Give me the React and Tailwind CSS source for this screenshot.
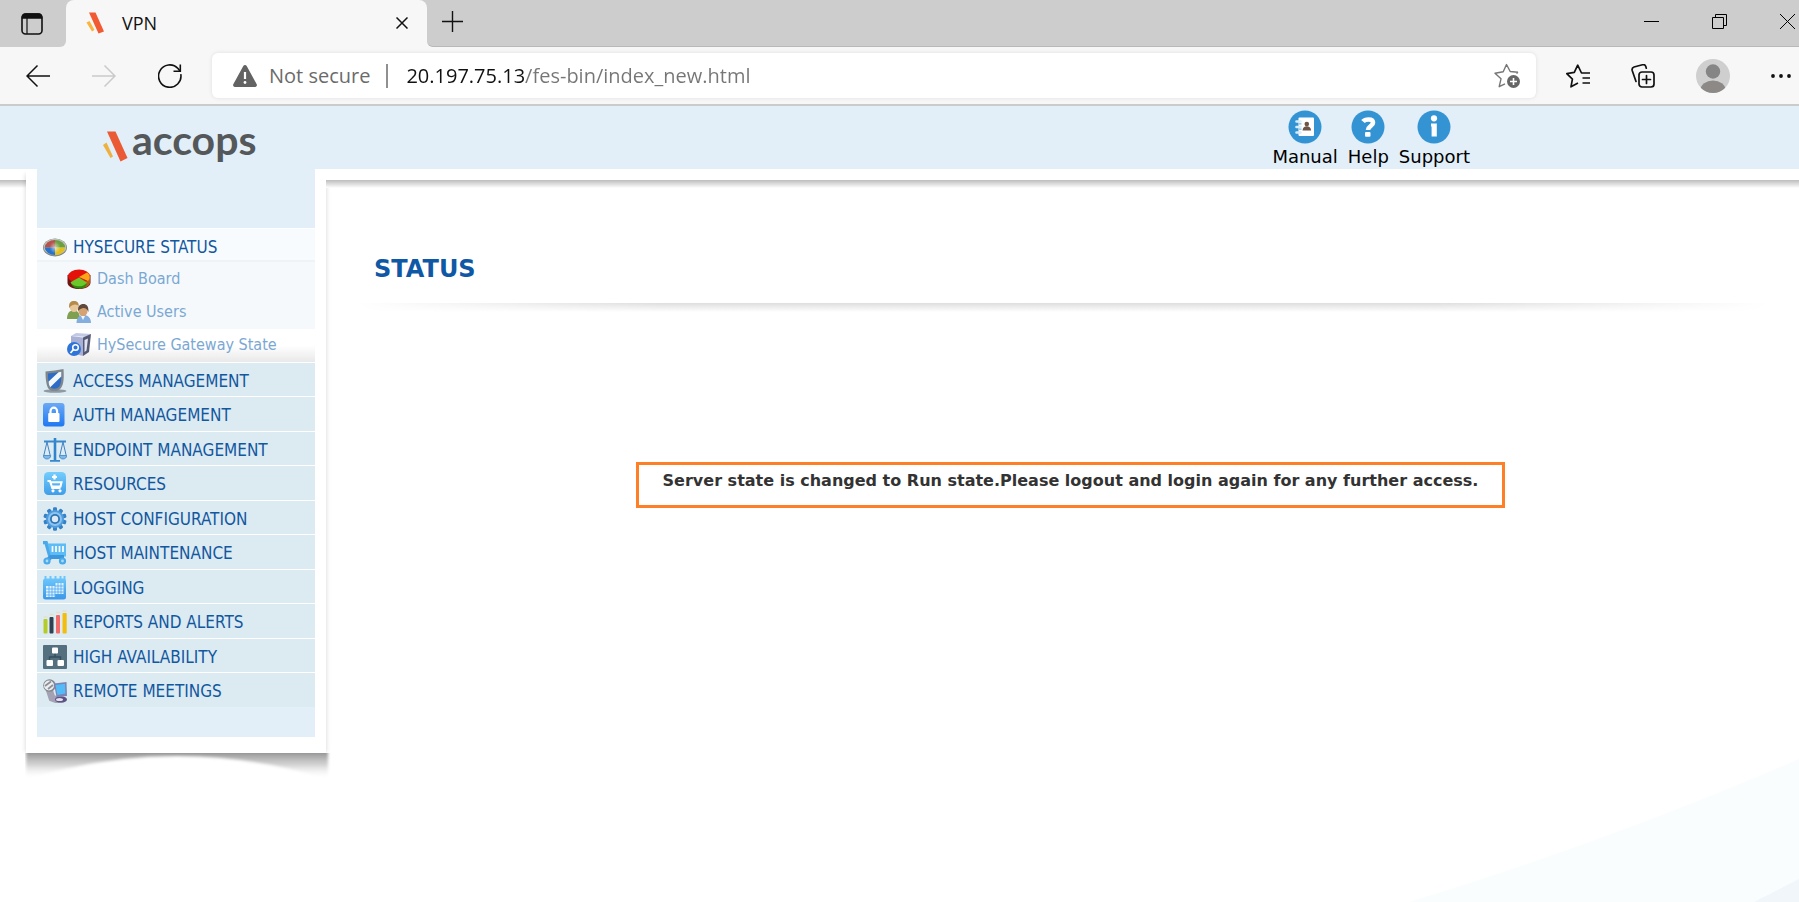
import React from 'react';

// --- BROWSER ICONS ---
const TabActionsIcon = () => (
  <svg viewBox="0 0 22 22" className="size-[22px]" fill="none" stroke="#111" strokeWidth="1.6">
    <rect x="1" y="1" width="20" height="20" rx="3.5" />
    <path d="M1.5 5V4a3 3 0 0 1 3-3h13a3 3 0 0 1 3 3v1z" fill="#111" />
    <path d="M6 5v16" strokeWidth="1.2" />
  </svg>
);

const Favicon = () => (
  <svg viewBox="0 0 18 22" className="h-[22px] w-[18px]">
    <path d="M3 .5h6.500l8.500 19-5.500 2z" fill="#f15a33" />
    <path d="M.5 10.500l3-1.500 5 9-2.500 1.500z" fill="#f9b53c" />
  </svg>
);

const CloseIcon = () => (
  <svg viewBox="0 0 12 12" className="size-3" fill="none" stroke="#111" strokeWidth="1.5">
    <path d="M.5.5l11 11M11.500.5l-11 11" />
  </svg>
);

const PlusIcon = () => (
  <svg viewBox="0 0 21 21" className="size-[21px]" fill="none" stroke="#111" strokeWidth="1.4">
    <path d="M10.500 0v21M0 10.500h21" />
  </svg>
);

const BackIcon = () => (
  <svg viewBox="0 0 24 24" className="size-6" fill="none" stroke="currentColor" strokeWidth="1.5">
    <path d="M24 12H1M11.500 1.500L1 12l10.500 10.500" />
  </svg>
);

const ReloadIcon = () => (
  <svg viewBox="0 0 24 24" className="size-6" fill="none" stroke="#111" strokeWidth="1.6">
    <path d="M22.800 10.200A11.200 11.200 0 1 1 20 4.500l2 2.500" />
    <path d="M22.300.5V7.200h-6.800" />
  </svg>
);

const WarningIcon = () => (
  <svg viewBox="0 0 24 22" className="h-[22px] w-6">
    <path d="M10.300 1a2 2 0 0 1 3.400 0l10 18.200A1.900 1.900 0 0 1 22 22H2a1.900 1.900 0 0 1-1.700-2.800z" fill="#636363" />
    <path d="M12 7v7" stroke="#fff" strokeWidth="2.200" />
    <circle cx="12" cy="17.500" r="1.400" fill="#fff" />
  </svg>
);

const AddFavoriteIcon = () => (
  <svg viewBox="0 0 26 26" className="size-[26px]" fill="none" stroke="#767676" strokeWidth="1.4" strokeLinejoin="round">
    <path d="M24 9.200l-7.800-.7L12.500 1.500 9.200 8.700 1 10.300l6 5.500L5.200 23.700l5.800-2.800M24 9.200l-1.500 1.300" />
    <circle cx="19.500" cy="18.500" r="6.500" fill="#666" stroke="none" />
    <path d="M19.500 15v7M16 18.500h7" stroke="#fff" strokeWidth="1.600" />
  </svg>
);

const FavoritesIcon = () => (
  <svg viewBox="0 0 24 24" className="size-6" fill="none" stroke="#111" strokeWidth="1.7" strokeLinejoin="round">
    <path d="M24 9h-8.500L11.700 1.200 8.300 8.300.8 9.600l5.600 5.500L5 22.800l7-3.800M16.500 14H24M16.500 19H24" />
  </svg>
);

const CollectionsIcon = () => (
  <svg viewBox="0 0 24 24" className="size-6" fill="none" stroke="#111" strokeWidth="1.7" strokeLinecap="round">
    <rect x="8" y="8" width="15" height="15" rx="3" />
    <path d="M15.500 11.500v8M11.500 15.500h8" />
    <path d="M5 17.500L1.200 6.500C.8 4.800 1.400 3.500 3 3l8.500-2.200c1.600-.4 2.800.3 3.300 1.800l.5 1.600" />
  </svg>
);

const AvatarIcon = () => (
  <svg viewBox="0 0 34 34" className="size-[34px]">
    <defs>
      <clipPath id="avatarClip"><circle cx="17" cy="17" r="17" /></clipPath>
    </defs>
    <g clipPath="url(#avatarClip)">
      <rect width="34" height="34" fill="#cfcfcf" />
      <circle cx="17" cy="12.500" r="7.200" fill="#858585" />
      <ellipse cx="17" cy="31" rx="12.500" ry="9.500" fill="#8d8987" />
    </g>
  </svg>
);

const DotsIcon = () => (
  <svg viewBox="0 0 20 4" className="h-1 w-5" fill="#111">
    <circle cx="2" cy="2" r="1.900" />
    <circle cx="10" cy="2" r="1.900" />
    <circle cx="18" cy="2" r="1.900" />
  </svg>
);

// --- PAGE HEADER ICONS ---
const ManualIcon = () => (
  <svg viewBox="0 0 34 34" className="size-[34px]">
    <circle cx="17" cy="17" r="16.500" fill="#3494d3" />
    <rect x="10.500" y="7.500" width="15.500" height="18.500" rx="1" fill="#fff" />
    <path d="M8.500 11.500h4M8.500 17h4M8.500 22.500h4" stroke="#dcecf7" strokeWidth="2.600" strokeLinecap="round" />
    <path d="M11 13.800h2.500M11 19.200h2.500" stroke="#7db9e2" strokeWidth="1.200" />
    <circle cx="18.800" cy="14" r="2.300" fill="#6d5445" />
    <path d="M14.500 20.500c.3-3 2-4.300 4.300-4.300s4 1.300 4.300 4.300z" fill="#6d5445" />
  </svg>
);

const HelpIcon = () => (
  <svg viewBox="0 0 34 34" className="size-[34px]">
    <circle cx="17" cy="17" r="16.500" fill="#3494d3" />
    <path d="M12 11.500c2-2.500 9.800-3.300 10 1 .2 3.500-4.800 3.500-5 7.500" fill="none" stroke="#fff" strokeWidth="4.600" />
    <rect x="14" y="22" width="5.500" height="4.800" rx="1" fill="#fff" />
  </svg>
);

const SupportIcon = () => (
  <svg viewBox="0 0 34 34" className="size-[34px]">
    <circle cx="17" cy="17" r="16.500" fill="#3494d3" />
    <circle cx="17" cy="8.300" r="3.100" fill="#fff" />
    <path d="M14 13.500h5.800v13h-5.200v-10H14z" fill="#fff" />
  </svg>
);

// --- MENU ICONS ---
const GlobeIcon = () => (
  <svg viewBox="0 0 24 24" className="size-6">
    <defs>
      <clipPath id="globeClip"><ellipse cx="12" cy="12.500" rx="10.200" ry="7.500" /></clipPath>
      <radialGradient id="globeGlow" cx=".5" cy=".5" r=".5">
        <stop offset="0" stopColor="#fff" stopOpacity=".6" />
        <stop offset="1" stopColor="#fff" stopOpacity="0" />
      </radialGradient>
    </defs>
    <ellipse cx="12" cy="12.500" rx="12" ry="9" fill="#80877f" />
    <ellipse cx="12" cy="12" rx="11.300" ry="8.200" fill="#bcc3bb" />
    <g clipPath="url(#globeClip)">
      <rect width="12" height="12.500" fill="#b5524b" />
      <rect x="12" width="12" height="12.500" fill="#6ba042" />
      <rect y="12.500" width="12" height="12" fill="#2672cc" />
      <rect x="12" y="12.500" width="12" height="12" fill="#e2c01e" />
      <ellipse cx="12" cy="12.500" rx="5.500" ry="6" fill="url(#globeGlow)" />
    </g>
  </svg>
);

const PieIcon = () => (
  <svg viewBox="0 0 24 24" className="size-6">
    <path d="M.5 8v7.500c0 4 5 6.500 11.500 6.500s11.500-2.500 11.500-6.500V8z" fill="#6e1512" />
    <path d="M12 13l11-2v5c-.5 3-5 5.500-11 5.500z" fill="#b0601a" />
    <path d="M4 16l8-4 8 5c-1 3-4 4.500-8 4.500S5 19.500 4 16z" fill="#2d8a0d" />
    <ellipse cx="12" cy="9.300" rx="11" ry="6.800" fill="#e3120b" />
    <path d="M12 10l8-4.500c3 2 4 5.500 1 8.500z" fill="#fba51a" />
    <path d="M12 10.500l8 5c-2 3-5 3.800-8 3.800s-7-1-8.500-4z" fill="#6cc72a" />
  </svg>
);

const UsersIcon = () => (
  <svg viewBox="0 0 24 24" className="size-6">
    <path d="M0 19c0-6 2.500-8.500 6.500-8.500s6.500 2.500 6.500 8.500z" fill="#7fa04e" />
    <ellipse cx="7" cy="6.800" rx="4.400" ry="5.200" fill="#e8c79a" />
    <path d="M2.200 8C1.500 2.500 4 1 7 1s5 1.500 4.800 5.500C10 4 6 3.500 2.200 8z" fill="#b58b4c" />
    <path d="M9.500 23c0-5.500 3-8 7-8s7.500 2.500 7.500 8z" fill="#84aede" />
    <ellipse cx="16" cy="10.800" rx="4.600" ry="5.400" fill="#d6a272" />
    <path d="M11.200 11C10.500 6 13 4 16.300 4s5.400 2 5.200 8c-2-4.500-6-5.500-10.300-1z" fill="#5d4a3c" />
    <path d="M14 16l2 4 2-4z" fill="#f3f6fa" />
  </svg>
);

const GatewayIcon = () => (
  <svg viewBox="0 0 24 24" className="size-6">
    <path d="M4 3l5-3 15 1-2.500 3z" fill="#c3c8e4" />
    <path d="M4 3l12 1.500V23L4 20z" fill="#a9b0d6" />
    <path d="M16 4.500L24 1l-2 18-6 4z" fill="#565a75" />
    <path d="M17.500 7l3.500-1.500-1.500 12-2 1.500z" fill="#dfe3f3" />
    <circle cx="7" cy="16" r="7" fill="#2f74d8" />
    <circle cx="8.500" cy="14.500" r="2.800" fill="none" stroke="#fff" strokeWidth="1.500" />
    <path d="M6.500 16.500l-3 3.500" stroke="#fff" strokeWidth="1.800" />
  </svg>
);

const ShieldIcon = () => (
  <svg viewBox="0 0 24 24" className="size-6">
    <ellipse cx="12" cy="22" rx="11.500" ry="1.700" fill="#8e9aa2" />
    <path d="M2.500 2.500C8 2 15 1 20.500 0c.5 8 .5 15-2.500 19-2 2.500-4 3-6.500 3s-5-.5-6.500-3C3 15 2.500 8 2.500 2.500z" fill="#7f868c" />
    <path d="M5 4.500c4.500-.3 9-1 13.300-1.800.2 6 0 12-2 14.800-1.500 1.800-3 2.200-5 2.200s-3.500-.4-4.500-2.200C5.200 14.500 5 9 5 4.500z" fill="#2c6bc8" />
    <path d="M5.600 12.500L15.500 3.200l2.800-.5v4.800L7.200 18.200C6 16.500 5.800 14.500 5.600 12.500z" fill="#f5f8fb" />
  </svg>
);

const LockIcon = () => (
  <svg viewBox="0 0 24 24" className="size-6">
    <defs>
      <linearGradient id="lockBg" x1="0" y1="0" x2="0" y2="1">
        <stop offset="0" stopColor="#6aa9f5" />
        <stop offset="1" stopColor="#1f78f2" />
      </linearGradient>
    </defs>
    <rect y="0" width="21.500" height="23.500" rx="3" fill="url(#lockBg)" />
    <path d="M7.500 11V8a3.300 3.300 0 0 1 6.600 0v3" fill="none" stroke="#fff" strokeWidth="2.200" />
    <rect x="5.200" y="10" width="11.300" height="9" rx="1" fill="#fff" />
  </svg>
);

const ScalesIcon = () => (
  <svg viewBox="0 0 24 24" className="size-6" fill="none" stroke="#3f83c4">
    <path d="M12 0v22" stroke="#2f84cc" strokeWidth="2.600" />
    <path d="M1 3.500h22M7 22.800h10" stroke="#3888cc" strokeWidth="1.800" />
    <path d="M4 4L.8 17.500M4 4l3.200 13.500M20 4l-3.200 13.500M20 4l3.200 13.500" strokeWidth="1" />
    <path d="M.3 17.500h7.400c0 2-1.500 3.500-3.700 3.500S.3 19.500.3 17.500zM16.300 17.500h7.400c0 2-1.500 3.500-3.700 3.500s-3.700-1.500-3.700-3.500z" fill="#7fb9ea" strokeWidth=".8" />
  </svg>
);

const ResourcesIcon = () => (
  <svg viewBox="0 0 24 24" className="size-6">
    <defs>
      <linearGradient id="resBg" x1="0" y1="0" x2="0" y2="1">
        <stop offset="0" stopColor="#74cdfd" />
        <stop offset="1" stopColor="#3f9de9" />
      </linearGradient>
    </defs>
    <rect x="1" y="0" width="22" height="23" rx="4.500" fill="url(#resBg)" />
    <path d="M11.500 2.500v5M9 5h5" fill="none" stroke="#fff" strokeWidth="2.200" />
    <path d="M4.500 9H7l2.300 7h8.200M8 10.200h10.500l-1 4.300H9" fill="none" stroke="#fff" strokeWidth="2.100" />
    <circle cx="10" cy="18.800" r="1.600" fill="#fff" />
    <circle cx="17" cy="18.800" r="1.600" fill="#fff" />
  </svg>
);

const GearIcon = () => (
  <svg viewBox="0 0 24 24" className="size-6">
    <g fill="#3481c6">
      {[0, 36, 72, 108, 144].map((deg) => (
        <rect key={deg} x="10" y=".3" width="4" height="23.400" rx="1.200" transform={`rotate(${deg} 12 12)`} />
      ))}
    </g>
    <circle cx="12" cy="12" r="9" fill="#4f9ddc" />
    <circle cx="12" cy="12" r="7" fill="#8cc4ef" />
    <circle cx="12" cy="12" r="5" fill="#2f74b8" />
    <circle cx="12" cy="12" r="3.200" fill="#dceaf2" />
  </svg>
);

const CartIcon = () => (
  <svg viewBox="0 0 24 24" className="size-6">
    <path d="M0 1.500h3L7 15.500" fill="none" stroke="#4aa9ea" strokeWidth="3.600" />
    <path d="M4.500 2.500h18.500v13H8z" fill="#5bbcf6" />
    <path d="M9.500 5v6M13 5v6M16.500 5v6M20 5v6" stroke="#fff" strokeWidth="1.700" />
    <path d="M4 19.500l4-3.500h13" fill="none" stroke="#3c97dd" strokeWidth="4" />
    <circle cx="4" cy="20" r="3.600" fill="#4aa9ea" />
    <circle cx="19.500" cy="20" r="3.600" fill="#4aa9ea" />
    <circle cx="4" cy="20" r="1.400" fill="#a9dcfb" />
    <circle cx="19.500" cy="20" r="1.400" fill="#a9dcfb" />
  </svg>
);

const CalendarIcon = () => (
  <svg viewBox="0 0 24 24" className="size-6">
    <defs>
      <linearGradient id="calBg" x1="0" y1="0" x2="0" y2="1">
        <stop offset="0" stopColor="#6cc6fb" />
        <stop offset="1" stopColor="#3c97e8" />
      </linearGradient>
    </defs>
    <path d="M2.500 0v4M7.500 0v4M12.500 0v4M17.500 0v4M21.500 0v4" stroke="#6cc6fb" strokeWidth="2" />
    <rect y="2.500" width="23" height="21" rx="2.500" fill="url(#calBg)" />
    <path d="M12 7h8.500v11H12v3H3V10h9z" fill="#e3f3fe" />
    <path d="M6 10v11M9 10v11M12 7v14M15 7v11M18 7v11M3 13h17.500M3 16h17.500M12 10h8.500M3 19h9" stroke="#58aff0" strokeWidth=".9" />
  </svg>
);

const BarsIcon = () => (
  <svg viewBox="0 0 24 24" className="size-6">
    <rect x=".5" y="9" width="4" height="14.500" rx="1" fill="#b5cc25" />
    <rect x="6.500" y="7" width="4" height="16.500" rx="1" fill="#2f4153" />
    <rect x="13" y="5" width="4" height="18.500" rx="1" fill="#f26a6a" />
    <rect x="19.500" y="3" width="4.200" height="20.500" rx="1" fill="#f2bd0c" />
    <path d="M.5 7h4M6.500 4.500h4M13 2.500h4M19.500 1h4.200" stroke="#e6dfc8" strokeWidth="1.500" />
  </svg>
);

const ClusterIcon = () => (
  <svg viewBox="0 0 24 24" className="size-6">
    <rect width="24" height="24" rx="1" fill="#54707f" />
    <path d="M12 8v4M6.500 16v-4h11v4" fill="none" stroke="#34505f" strokeWidth="1.400" />
    <rect x="9" y="2.500" width="6" height="6" rx="1" fill="#fff" />
    <rect x="3.500" y="15" width="6.500" height="6" rx="1" fill="#fff" />
    <rect x="14.500" y="15" width="6.500" height="6" rx="1" fill="#fff" />
  </svg>
);

const MeetingsIcon = () => (
  <svg viewBox="0 0 24 24" className="size-6">
    <path d="M6 10l3 9 8 3" fill="none" stroke="#a3a1b4" strokeWidth="7" />
    <circle cx="6.500" cy="6.500" r="6.300" fill="#85878f" />
    <circle cx="6" cy="6.500" r="5" fill="#eceef1" />
    <path d="M2 7l6-4.500M5 10l5-4" stroke="#8d8f97" strokeWidth="1.800" />
    <ellipse cx="18" cy="20.500" rx="6" ry="3.300" fill="#5e5285" />
    <ellipse cx="16.500" cy="20.500" rx="3.500" ry="1.600" fill="#e4e2ee" />
    <path d="M11 4.500L23.500 3l.5 14-10.500 1z" fill="#7d84b3" />
    <path d="M12.500 6L22 4.800l.4 9.800-8 1.500z" fill="#52bbf8" />
  </svg>
);

// --- MENU DATA ---
const STATUS_ITEMS = [
  { label: 'Dash Board', Icon: PieIcon },
  { label: 'Active Users', Icon: UsersIcon },
  { label: 'HySecure Gateway State', Icon: GatewayIcon, active: true },
];

const MENU_ITEMS = [
  { label: 'ACCESS MANAGEMENT', Icon: ShieldIcon },
  { label: 'AUTH MANAGEMENT', Icon: LockIcon },
  { label: 'ENDPOINT MANAGEMENT', Icon: ScalesIcon },
  { label: 'RESOURCES', Icon: ResourcesIcon },
  { label: 'HOST CONFIGURATION', Icon: GearIcon },
  { label: 'HOST MAINTENANCE', Icon: CartIcon },
  { label: 'LOGGING', Icon: CalendarIcon },
  { label: 'REPORTS AND ALERTS', Icon: BarsIcon },
  { label: 'HIGH AVAILABILITY', Icon: ClusterIcon },
  { label: 'REMOTE MEETINGS', Icon: MeetingsIcon },
];

const HEADER_LINKS = [
  { label: 'Manual', Icon: ManualIcon },
  { label: 'Help', Icon: HelpIcon },
  { label: 'Support', Icon: SupportIcon },
];

// --- BROWSER ---
const TabStrip = () => (
  <div className="flex h-[47px] bg-[#f7f7f7]">
    <div className="flex w-[66px] items-center rounded-br-md bg-[#cdcdcd] pl-[21px]">
      <button type="button" aria-label="Tab actions"><TabActionsIcon /></button>
    </div>
    <div className="w-[361px] bg-[#cdcdcd]">
      <div className="flex h-full items-center rounded-t-lg bg-[#f7f7f7] pr-[19px] pb-0.5 pl-5">
        <Favicon />
        <span className="ml-[18px] flex-1 text-[18px] leading-6 text-[#111]">VPN</span>
        <button type="button" aria-label="Close tab"><CloseIcon /></button>
      </div>
    </div>
    <div className="flex flex-1 items-center rounded-bl-md border-b border-[#b8b8b8] bg-[#cdcdcd] pb-1 pl-[15px]">
      <button type="button" aria-label="New tab"><PlusIcon /></button>
      <div className="ml-auto flex items-center gap-[53px] pr-1">
        <button type="button" aria-label="Minimize">
          <svg viewBox="0 0 15 15" className="size-[15px]" stroke="#000" strokeWidth="1"><path d="M0 7.500h15" /></svg>
        </button>
        <button type="button" aria-label="Restore">
          <svg viewBox="0 0 15 15" className="size-[15px]" fill="none" stroke="#000" strokeWidth="1">
            <path d="M.5 3.500h11v11H.5zM3.500 3.500v-3h11v11h-3" />
          </svg>
        </button>
        <button type="button" aria-label="Close window">
          <svg viewBox="0 0 15 15" className="size-[15px]" fill="none" stroke="#000" strokeWidth="1"><path d="M0 0l15 15M15 0L0 15" /></svg>
        </button>
      </div>
    </div>
  </div>
);

const Toolbar = () => (
  <div className="flex h-[59px] items-center border-b-2 border-[#cbcbcb] bg-[#f7f7f7] pr-2 pl-[26px]">
    <div className="flex gap-[42px]">
      <button type="button" aria-label="Back" className="text-[#111]"><BackIcon /></button>
      <button type="button" aria-label="Forward" disabled className="rotate-180 text-[#cacaca]"><BackIcon /></button>
      <button type="button" aria-label="Reload"><ReloadIcon /></button>
    </div>
    <div className="ml-[30px] flex h-[45px] flex-1 items-center rounded-md bg-white pr-4 pl-[21px] shadow-[0_0_4px_rgba(0,0,0,0.10)]">
      <button type="button" className="flex items-center gap-3 text-[20px] leading-7 whitespace-nowrap text-[#6b6b6b]">
        <WarningIcon />
        Not secure
      </button>
      <span className="ml-4 h-6 w-0.5 bg-[#909090]" />
      <input
        type="text"
        aria-label="Address"
        defaultValue="20.197.75.13/fes-bin/index_new.html"
        className="ml-[18px] h-8 min-w-0 flex-1 bg-[linear-gradient(90deg,#111_118px,#767676_118px)] bg-clip-text text-[20px] leading-7 text-transparent outline-none"
      />
      <button type="button" aria-label="Add to favorites"><AddFavoriteIcon /></button>
    </div>
    <div className="ml-[30px] flex items-center gap-[41px]">
      <button type="button" aria-label="Favorites"><FavoritesIcon /></button>
      <button type="button" aria-label="Collections"><CollectionsIcon /></button>
      <button type="button" aria-label="Profile"><AvatarIcon /></button>
      <button type="button" aria-label="Settings and more"><DotsIcon /></button>
    </div>
  </div>
);

// --- PAGE ---
// Blue strip with its white edge and drop shadow, runs on both sides of the sidebar
const HeaderBand = ({ children }) => (
  <div>
    <div className="h-[63px] bg-[#e2eff8]">{children}</div>
    <div className="h-[11px] bg-white" />
    <div className="h-2 bg-linear-to-b from-[#bdbdbd] to-white" />
  </div>
);

const Logo = () => (
  <div className="flex h-[63px] items-end bg-[#e2eff8] pb-[7px] pl-[77px]">
    <svg viewBox="0 0 25 31" className="h-[31px] w-[25px]">
      <path d="M4 .5h8.500L24.500 27l-7 3.500z" fill="#ea5b35" />
      <path d="M0 14l3.500-2.500 6.500 14-2.500 1.500z" fill="#eeb141" />
    </svg>
    <span className="ml-1 font-['Lato','Open_Sans',sans-serif] text-[41px] leading-[44px] font-bold text-[#54585b]">accops</span>
  </div>
);

const Sidebar = () => (
  <aside className="w-[300px] font-['DejaVu_Sans_Condensed','DejaVu_Sans',sans-serif]">
    <Logo />
    <div className="border-x-[11px] border-b-[16px] border-white bg-[#e2eff8] shadow-[-4px_2px_4px_-3px_rgba(0,0,0,0.12),4px_2px_4px_-3px_rgba(0,0,0,0.12)]">
      <nav className="pt-[59px] pb-[30px]">
        <a href="#status" className="flex h-[34px] items-center gap-1.5 border-t border-b-2 border-t-white border-b-[#eef3f7] bg-[#f8fbfe] pt-1 pl-1.5 text-[17px] leading-6 text-[#12589f]">
          <GlobeIcon />
          HYSECURE STATUS
        </a>
        <ul className="bg-[#f5f9fc] pt-px">
          {STATUS_ITEMS.map(({ label, Icon, active }) => (
            <li key={label}>
              <a
                href="#status"
                className={`flex h-[33px] items-center gap-1.5 pb-0.5 pl-[30px] text-[16px] leading-6 text-[#7aa8d3] ${active ? 'bg-linear-to-b from-white from-50% to-[#e9e9e9]' : ''}`}
              >
                <Icon />
                {label}
              </a>
            </li>
          ))}
        </ul>
        <ul>
          {MENU_ITEMS.map(({ label, Icon }) => (
            <li key={label} className="border-t border-white bg-[#dceaf2] odd:h-[34px] even:h-[35px]">
              <a href="#menu" className="flex h-full items-center gap-1.5 pt-0.5 pl-1.5 text-[17px] leading-6 text-[#12589f]">
                <Icon />
                {label}
              </a>
            </li>
          ))}
        </ul>
      </nav>
    </div>
    {/* curled paper shadow */}
    <svg viewBox="0 0 300 28" className="block h-7 w-full overflow-visible">
      <defs>
        <linearGradient id="curl" x1="0" y1="0" x2="0" y2="1">
          <stop offset="0" stopColor="#858585" />
          <stop offset=".5" stopColor="#b4b4b4" stopOpacity=".6" />
          <stop offset="1" stopColor="#fff" stopOpacity="0" />
        </linearGradient>
        <filter id="curlBlur" x="-5%" y="-20%" width="110%" height="150%">
          <feGaussianBlur stdDeviation="1.500" />
        </filter>
        <clipPath id="curlClip"><rect x="-1" y="0" width="306" height="30" /></clipPath>
      </defs>
      <g clipPath="url(#curlClip)">
        <path d="M0-3H302V26Q151-20 0 26z" fill="url(#curl)" filter="url(#curlBlur)" />
      </g>
    </svg>
  </aside>
);

export default function App() {
  return (
    <div className="flex min-h-screen flex-col bg-white font-['Open_Sans','Noto_Sans',sans-serif]">
      <TabStrip />
      <Toolbar />
      <div className="relative flex flex-1 font-['DejaVu_Sans',sans-serif]">
        <svg viewBox="0 0 390 145" className="pointer-events-none absolute right-0 bottom-0 h-[145px] w-[390px]">
          <path d="M0 145Q200 84 390 2V145z" fill="#f9fdfe" />
          <path d="M345 145L390 122V145z" fill="#f1f6fb" />
        </svg>
        <div className="w-[26px]">
          <HeaderBand />
        </div>
        <Sidebar />
        <div className="flex-1">
          <HeaderBand>
            <div className="flex justify-end gap-2.5 pt-1 pr-[329px]">
              {HEADER_LINKS.map(({ label, Icon }) => (
                <a key={label} href="#header" className="flex flex-col items-center gap-px text-[18px] leading-6 text-black">
                  <Icon />
                  {label}
                </a>
              ))}
            </div>
          </HeaderBand>
          <main className="pl-4">
            <h1 className="pt-[67px] pl-8 text-[24px] leading-7 font-bold text-[#0f58a5]">STATUS</h1>
            <div className="mt-5 h-[9px] bg-linear-to-b from-[#dedede] to-white mask-[linear-gradient(90deg,transparent_1%,#000_22%,#000_75%,transparent_98%)]" />
            <p className="mx-auto mt-[150px] w-fit border-[3px] border-[#ff7f27] px-6 pt-1 pb-3 text-center text-[16px] leading-6 font-bold text-[#333]">
              Server state is changed to Run state.Please logout and login again for any further access.
            </p>
          </main>
        </div>
      </div>
    </div>
  );
}
